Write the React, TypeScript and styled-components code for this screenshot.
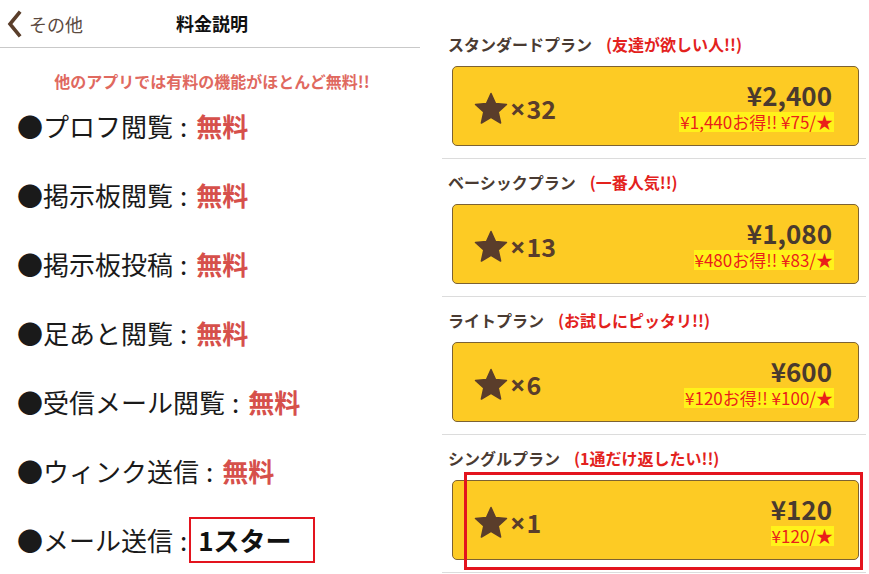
import styled, { createGlobalStyle } from 'styled-components';

const GlobalStyle = createGlobalStyle`
  body {
    margin: 0;
    background: #ffffff;
    font-family: "Noto Sans CJK JP", "Noto Sans", sans-serif;
  }
`;

const Page = styled.div`
  display: flex;
  width: 869px;
  height: 574px;
  overflow: hidden;
  background: #fff;
`;

const LeftPane = styled.div`
  width: 420px;
  flex-shrink: 0;
  display: flex;
  flex-direction: column;
`;

const Header = styled.div`
  height: 48px;
  border-bottom: 1px solid #c9c9c9;
  display: flex;
  align-items: center;
  position: relative;
  justify-content: center;
`;

const BackButton = styled.button`
  position: absolute;
  left: 6px;
  top: 10px;
  display: flex;
  align-items: center;
  gap: 5px;
  background: transparent;
  border: none;
  padding: 0;
  font-family: inherit;
  font-size: 18px;
  color: #5b4a3f;
`;

const Title = styled.div`
  font-size: 18px;
  font-weight: 700;
  color: #111;
  margin-top: -2px;
  padding-left: 4px;
`;

const Intro = styled.div`
  margin-top: 23px;
  line-height: 20px;
  text-align: center;
  font-size: 16px;
  font-weight: 700;
  color: #e0695f;
  padding-left: 4px;
`;

const FeatureList = styled.ul`
  list-style: none;
  margin: 0;
  padding: 0 0 0 17px;
`;

const FeatureItem = styled.li`
  height: 69px;
  display: flex;
  align-items: center;
  font-size: 26px;
  color: #1a1a1a;
  white-space: nowrap;
`;

const Colon = styled.span<{ $tight?: boolean }>`
  padding: ${(p) => (p.$tight ? '0 2px 0 7px' : '0 9px 0 7px')};
`;

const Free = styled.span`
  color: #d6504b;
  font-weight: 700;
`;

const Boxed = styled.span`
  display: inline-flex;
  align-items: center;
  height: 42px;
  width: 115px;
  padding-left: 7px;
  border: 2px solid #e3141e;
  font-weight: 700;
  color: #111;
`;

const RightPane = styled.div`
  flex: 1;
  padding: 21px 3px 0 22px;
  display: flex;
  flex-direction: column;
`;

const Section = styled.div`
  padding: 12px 0;
  border-bottom: 1px solid #dcdcdc;
`;

const SectionTitle = styled.div`
  height: 22px;
  display: flex;
  align-items: center;
  gap: 14px;
  padding-left: 6px;
  font-size: 16px;
  font-weight: 700;
  color: #4a3b32;
`;

const Badge = styled.span`
  color: #e3221d;
`;

const CardWrap = styled.div`
  position: relative;
  margin: 11px 7px 0 10px;
`;

const Card = styled.div`
  height: 78px;
  border: 1px solid #7c6233;
  border-radius: 5px;
  background: #fdcb24;
  display: flex;
  align-items: center;
  justify-content: space-between;
  padding: 0 24px 0 21px;
`;

const Stars = styled.div`
  display: flex;
  align-items: center;
  color: #5a3d2b;
  font-size: 25px;
  font-weight: 700;
  margin-top: 4px;
`;

const Times = styled.span`
  font-family: "Noto Sans", sans-serif;
  font-size: 27px;
  line-height: 1;
  margin: 1px 1px 0 2px;
`;

const Prices = styled.div`
  display: flex;
  flex-direction: column;
  align-items: flex-end;
  gap: 2px;
`;

const Price = styled.div`
  font-size: 26px;
  font-weight: 700;
  color: #4a3a2e;
  line-height: 30px;
  margin-right: 2px;
`;

const Deal = styled.div`
  font-size: 17px;
  line-height: 20px;
  color: #ea1f1a;
  background: #fff21a;
  padding: 0 1px;
`;

const Highlight = styled.div`
  position: absolute;
  left: 12px;
  right: -4px;
  top: -8px;
  bottom: -10px;
  border: 3px solid #e3141e;
  pointer-events: none;
`;

const StarIcon = () => (
  <svg width="34" height="33" viewBox="0 0 34 33">
    <polygon
      points="17,1.5 21.5,11.5 32.5,12.5 24.2,19.9 26.6,31 17,25.3 7.4,31 9.8,19.9 1.5,12.5 12.5,11.5"
      fill="#5a3d2b"
      stroke="#5a3d2b"
      strokeWidth="1.5"
      strokeLinejoin="round"
    />
  </svg>
);

const ChevronLeft = () => (
  <svg width="18" height="28" viewBox="0 0 18 28">
    <path d="M13 3 L4 14 L13 25" fill="none" stroke="#5a3e2b" strokeWidth="3.6" strokeLinecap="square" />
  </svg>
);

interface Plan {
  name: string;
  badge: string;
  count: number;
  price: string;
  deal: string;
  marked?: boolean;
}

const plans: Plan[] = [
  { name: 'スタンダードプラン', badge: '(友達が欲しい人!!)', count: 32, price: '¥2,400', deal: '¥1,440お得!! ¥75/★' },
  { name: 'ベーシックプラン', badge: '(一番人気!!)', count: 13, price: '¥1,080', deal: '¥480お得!! ¥83/★' },
  { name: 'ライトプラン', badge: '(お試しにピッタリ!!)', count: 6, price: '¥600', deal: '¥120お得!! ¥100/★' },
  { name: 'シングルプラン', badge: '(1通だけ返したい!!)', count: 1, price: '¥120', deal: '¥120/★', marked: true },
];

const features = ['プロフ閲覧', '掲示板閲覧', '掲示板投稿', '足あと閲覧', '受信メール閲覧', 'ウィンク送信'];

export default function App() {
  return (
    <Page>
      <GlobalStyle />
      <LeftPane>
        <Header>
          <BackButton>
            <ChevronLeft />
            その他
          </BackButton>
          <Title>料金説明</Title>
        </Header>
        <Intro>他のアプリでは有料の機能がほとんど無料!!</Intro>
        <FeatureList>
          {features.map((f) => (
            <FeatureItem key={f}>
              ●{f}
              <Colon>:</Colon>
              <Free>無料</Free>
            </FeatureItem>
          ))}
          <FeatureItem>
            ●メール送信
            <Colon $tight>:</Colon>
            <Boxed>1スター</Boxed>
          </FeatureItem>
        </FeatureList>
      </LeftPane>
      <RightPane>
        {plans.map((p) => (
          <Section key={p.name}>
            <SectionTitle>
              {p.name}
              <Badge>{p.badge}</Badge>
            </SectionTitle>
            <CardWrap>
              <Card>
                <Stars>
                  <StarIcon />
                  <Times>×</Times>
                  {p.count}
                </Stars>
                <Prices>
                  <Price>{p.price}</Price>
                  <Deal>{p.deal}</Deal>
                </Prices>
              </Card>
              {p.marked && <Highlight />}
            </CardWrap>
          </Section>
        ))}
      </RightPane>
    </Page>
  );
}
